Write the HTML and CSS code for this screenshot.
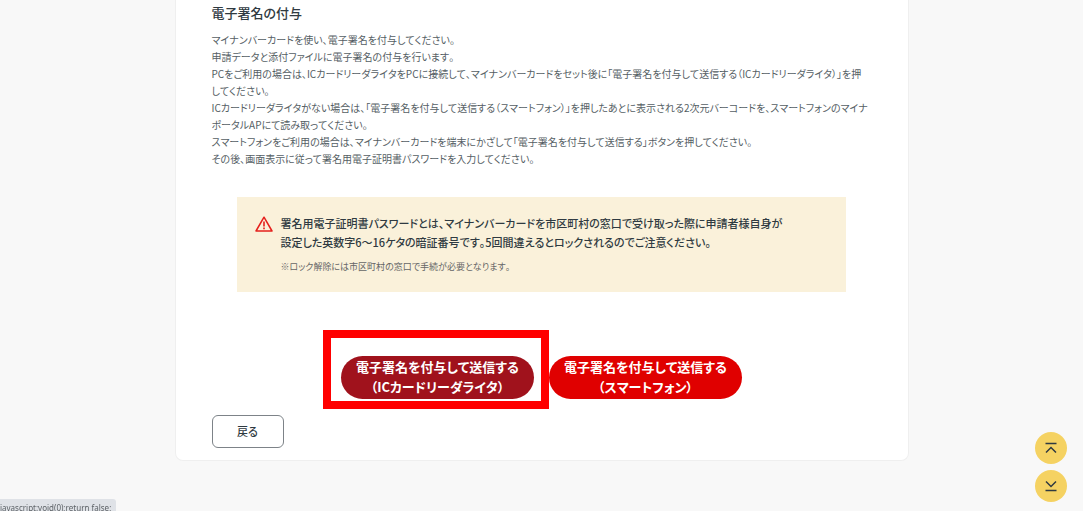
FILE: index.html
```html
<!DOCTYPE html>
<html lang="ja">
<head>
    <meta charset="UTF-8">
    <meta name="viewport" content="width=device-width, initial-scale=1.0">
    <title>電子署名の付与</title>
    <link rel="stylesheet" href="styles.css">
</head>
<body>
    <main class="card">
        <h1>電子署名の付与</h1>

        <div class="description">
            <p>マイナンバーカードを使い、電子署名を付与してください。</p>
            <p>申請データと添付ファイルに電子署名の付与を行います。</p>
            <p>PCをご利用の場合は、ICカードリーダライタをPCに接続して、マイナンバーカードをセット後に「電子署名を付与して送信する（ICカードリーダライタ）」を押してください。</p>
            <p>ICカードリーダライタがない場合は、「電子署名を付与して送信する（スマートフォン）」を押したあとに表示される2次元バーコードを、スマートフォンのマイナポータルAPにて読み取ってください。</p>
            <p>スマートフォンをご利用の場合は、マイナンバーカードを端末にかざして「電子署名を付与して送信する」ボタンを押してください。</p>
            <p>その後、画面表示に従って署名用電子証明書パスワードを入力してください。</p>
        </div>

        <div class="notice">
            <svg class="notice-icon" viewBox="0 0 18 16" aria-hidden="true">
                <path d="M9 1.2 17 15H1Z" fill="none" stroke="#e5201c" stroke-width="1.5" stroke-linejoin="round"/>
                <path d="M9 5.5v5M9 11.6v1.6" fill="none" stroke="#e5201c" stroke-width="1.6"/>
            </svg>
            <div>
                <p class="notice-text">署名用電子証明書パスワードとは、マイナンバーカードを市区町村の窓口で受け取った際に申請者様自身が<br>設定した英数字6～16ケタの暗証番号です。5回間違えるとロックされるのでご注意ください。</p>
                <p class="notice-sub">※ロック解除には市区町村の窓口で手続が必要となります。</p>
            </div>
        </div>

        <div class="actions">
            <div class="highlight">
                <button type="button" class="btn-send btn-active">電子署名を付与して送信する<br>（ICカードリーダライタ）</button>
            </div>
            <button type="button" class="btn-send">電子署名を付与して送信する<br>（スマートフォン）</button>
        </div>

        <button type="button" class="btn-back">戻る</button>
    </main>

    <!-- ページ内移動ボタン -->
    <div class="page-nav">
        <button type="button" class="nav-btn" aria-label="ページの先頭へ">
            <svg viewBox="0 0 32 32" aria-hidden="true"><path d="M10.5 11.5h11M11 20.5l5-5 5 5"/></svg>
        </button>
        <button type="button" class="nav-btn" aria-label="ページの末尾へ">
            <svg viewBox="0 0 32 32" aria-hidden="true"><path d="M10.5 20.5h11M11 11.5l5 5 5-5"/></svg>
        </button>
    </div>

    <div class="link-status">javascript:void(0);return false;</div>
</body>
</html>
```

FILE: styles.css
```css
* {
    box-sizing: border-box;
}
body {
    margin: 0;
    min-height: 100vh;
    background-color: #f8f8f8;
    color: #2f3a41;
    font-family: "Noto Sans CJK JP", sans-serif;
    font-feature-settings: "palt";
    font-kerning: none;
    font-size: 10px;
    line-height: 17px;
}
h1, p {
    margin: 0;
}
button {
    font: inherit;
    font-feature-settings: inherit;
    font-kerning: inherit;
    cursor: pointer;
}
.card {
    max-width: 734px;
    margin: 0 auto;
    padding: 3px 36px 12px;
    background: #fff;
    border: 1px solid #efefef;
    border-top: none;
    border-radius: 0 0 8px 8px;
}
h1 {
    margin-bottom: 8px;
    font-size: 13px;
    line-height: 20px;
    font-weight: 500;
}
.description {
    padding-right: 2px;
    color: #555e64;
}
.notice {
    display: flex;
    gap: 8px;
    margin: 30px 26px 0 25px;
    padding: 17px 17px 17px 18px;
    background: #faf1da;
}
.notice-icon {
    flex: none;
    width: 18px;
    height: 16px;
    margin-top: 2px;
}
.notice-text {
    font-size: 11px;
    line-height: 19px;
    font-weight: 500;
}
.notice-sub {
    margin-top: 6px;
    font-size: 9px;
    color: #666;
}
.actions {
    display: flex;
    justify-content: center;
    gap: 15px;
    margin-top: 64px;
}
.highlight {
    position: relative;
}
.highlight::before {
    content: "";
    position: absolute;
    inset: -26px -15px -10px -18px;
    border: 8px solid #f00;
    pointer-events: none;
}
.btn-send {
    min-width: 193px;
    padding: 1px 12px 2px;
    border: none;
    border-radius: 22px;
    background: #e00000;
    color: #fff;
    font-size: 13px;
    line-height: 20px;
    font-weight: 700;
}
.btn-active {
    background: #a0121c;
}
.btn-back {
    display: block;
    min-width: 72px;
    margin-top: 16px;
    padding: 7px 16px;
    border: 1px solid #7d8388;
    border-radius: 6px;
    background: #fff;
    color: #2f3a41;
    font-size: 11px;
    font-weight: 500;
}
.page-nav {
    position: fixed;
    right: 16px;
    bottom: 9px;
    display: grid;
    gap: 6px;
}
.nav-btn {
    width: 32px;
    height: 32px;
    padding: 0;
    border: none;
    border-radius: 50%;
    background: #f5d262;
}
.nav-btn svg {
    display: block;
    fill: none;
    stroke: #2f3a41;
    stroke-width: 1.5;
}
.link-status {
    position: fixed;
    left: 0;
    bottom: 0;
    height: 12px;
    padding: 0 5px 0 0;
    background: #dfe2e7;
    border-top-right-radius: 3px;
    color: #5c6166;
    font-family: "Noto Sans", sans-serif;
    font-size: 8px;
    line-height: 18px;
}
```
